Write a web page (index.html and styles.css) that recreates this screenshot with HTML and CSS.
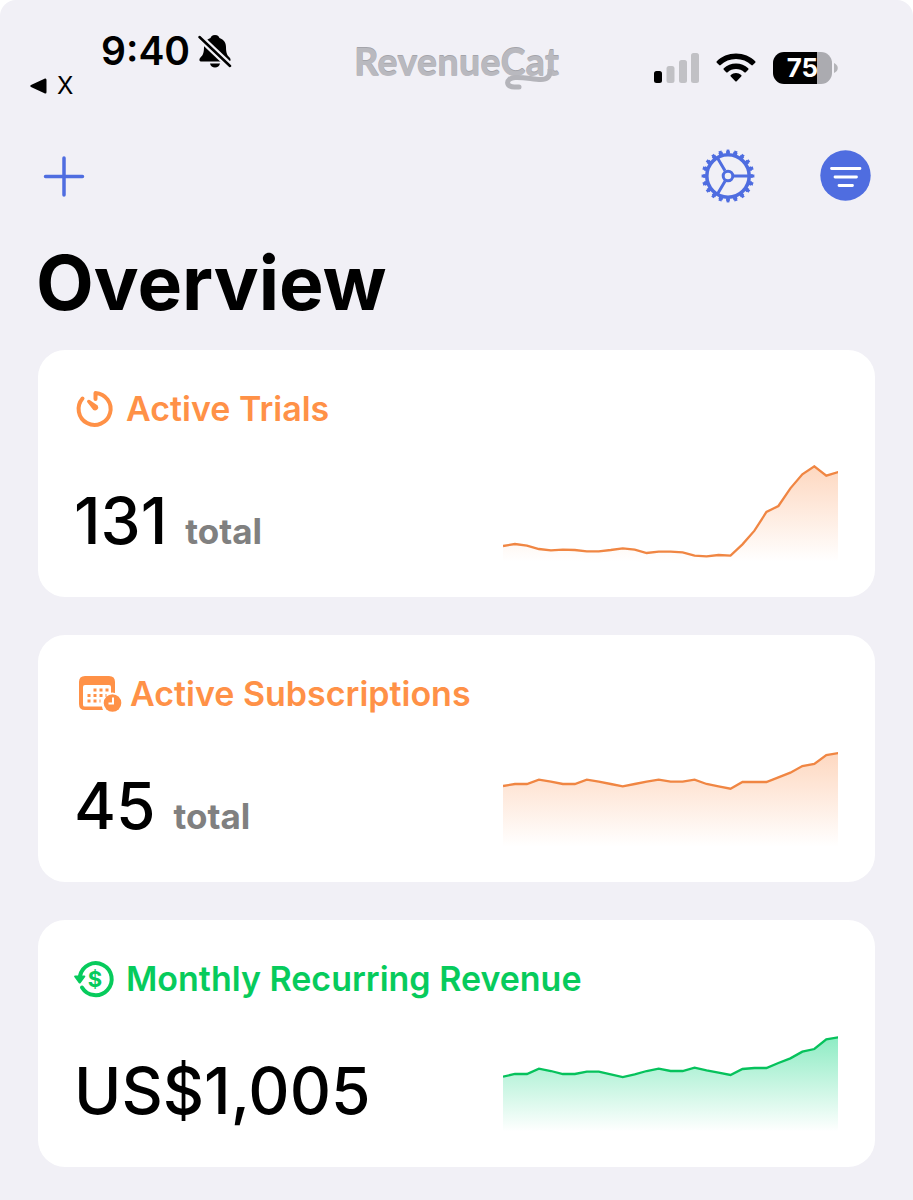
FILE: index.html
```html
<!DOCTYPE html>
<html lang="en">
<head>
    <meta charset="UTF-8">
    <meta name="viewport" content="width=device-width, initial-scale=1.0">
    <title>RevenueCat Overview</title>
    <link rel="stylesheet" href="styles.css">
</head>
<body>
    <div class="status">
        <div class="status-left">
            <div class="clock">
                <span>9:40</span>
                <svg width="34" height="34" viewBox="0 0 34 34" aria-label="Silent mode">
                    <path d="M17 1c-3 0-4 1.500-4.500 3C8 5.500 6 9 6 13c0 6-1 8-3.500 10.500C1 25 .8 27.500 3.500 27.500h27c2.700 0 2.500-2.500 1-4C29 21 28 19 28 13c0-4-2-7.500-6.500-9C21 2.500 20 1 17 1zM12 29.500h10c-.5 2.500-2.500 4-5 4s-4.500-1.500-5-4z"/>
                    <path class="slash-gap" d="M1 2.500L32 32"/>
                    <path class="slash" d="M1.500 3L32 32"/>
                </svg>
            </div>
            <a class="back" href="#">
                <svg width="17" height="16" viewBox="0 0 17 16"><path d="M15 0.500Q16.500 0 16.500 2v12q0 2-1.500 1.500L1 9Q-.500 8 1 7z"/></svg>
                X
            </a>
        </div>
        <div class="logo">
            RevenueCat
            <svg class="tail" width="56" height="22" viewBox="0 0 56 22"><path d="M47 0v2c0 6-3 8.500-9 8.500C30 10.500 22 8 12 8.500c-10 .5-10 10.500 1 9.500h3"/></svg>
        </div>
        <div class="status-right">
            <svg width="45" height="30" viewBox="0 0 45 30" aria-label="Signal">
                <rect x="0" y="18" width="8" height="12" rx="2.500"/>
                <g fill="#c1c1c5">
                    <rect x="12.500" y="13" width="8" height="17" rx="2.500"/>
                    <rect x="25" y="7" width="8" height="23" rx="2.500"/>
                    <rect x="37" y="0" width="8" height="30" rx="2.500"/>
                </g>
            </svg>
            <svg width="40" height="30" viewBox="0 0 40 30" aria-label="Wi-Fi">
                <path d="M20 0.500C12.500 .5 5.500 3.500 .8 8.200q-.8.800 0 1.500l2.400 2.400q.7.700 1.500 0C8.700 8.200 14 6 20 6s11.300 2.200 15.300 6.100q.8.700 1.500 0l2.400-2.400q.8-.700 0-1.500C34.500 3.500 27.500.5 20 .5z"/>
                <path d="M20 10.500c-4.700 0-9 1.800-12.200 4.800q-.8.800 0 1.500l2.400 2.400q.7.700 1.500 0c2.200-2 5.100-3.200 8.300-3.200s6.100 1.200 8.300 3.200q.8.700 1.500 0l2.400-2.400q.8-.700 0-1.500C29 12.300 24.700 10.500 20 10.500z"/>
                <path d="M20 20c-2 0-3.800.8-5.200 2q-.8.700 0 1.500l4.500 4.700q.7.700 1.400 0l4.500-4.700q.8-.800 0-1.500C23.800 20.800 22 20 20 20z"/>
            </svg>
            <div class="battery">
                <span class="level">75</span>
                <svg width="4" height="10" viewBox="0 0 4 10"><path d="M0 0c5 2 5 8 0 10z"/></svg>
            </div>
        </div>
    </div>

    <nav class="toolbar">
        <button type="button" aria-label="Add">
            <svg width="44" height="54" viewBox="0 0 44 54" class="line"><path d="M22 9v37M3.500 27.500h37"/></svg>
        </button>
        <div class="actions">
            <button type="button" aria-label="Settings">
                <svg width="54" height="54" viewBox="0 0 54 54" class="gear">
                    <circle cx="27" cy="27" r="21.200" stroke-width="3.600"/>
                    <circle cx="27" cy="27" r="23.500" stroke-width="2.500" pathLength="40" stroke-dasharray="1.1 0.9" stroke-dashoffset="0.550"/>
                    <circle cx="27" cy="27" r="25" stroke-width="2.800" pathLength="40" stroke-dasharray="0.760 1.240" stroke-dashoffset="0.380"/>
                    <circle cx="27" cy="27" r="4.800" stroke-width="3"/>
                    <path d="M33 27h14M24 21.800L16.500 9M24 32.200L16.500 45" stroke-width="3"/>
                </svg>
            </button>
            <button type="button" aria-label="Filter">
                <svg width="51" height="54" viewBox="0 0 51 54" class="filter">
                    <circle cx="25.500" cy="26.500" r="25.200"/>
                    <path d="M11.500 19.500h28.500M15 28h21.500M19 36.500h13.500"/>
                </svg>
            </button>
        </div>
    </nav>

    <h1>Overview</h1>

    <main>
        <section class="card orange">
            <h2>
                <svg width="40" height="40" viewBox="0 0 40 40">
                    <path class="ring" d="M6.500 9.500A16 16 0 1 0 19.500 4v6"/>
                    <path d="M11.500 11.200q1-.9 2.200-.2l8 5.500a3.300 3.300 0 0 1-4.400 4.600L11.300 13.200q-.7-1.200.2-2z"/>
                </svg>
                Active Trials
            </h2>
            <div class="body">
                <p class="metric"><span class="value">131</span> <span class="unit">total</span></p>
                <svg class="chart" id="trials" viewBox="0 0 1008 294" preserveAspectRatio="none"></svg>
            </div>
        </section>

        <section class="card orange">
            <h2>
                <svg width="44" height="40" viewBox="0 0 44 40">
                    <path fill-rule="evenodd" d="M9 2h24q6 0 6 6v11a9.500 9.500 0 0 0-4-.300V13q0-2-2-2H9q-2 0-2 2v18q0 1.500 2 1.500h17a11 11 0 0 0 1 3.500H9q-6 0-6-6V8q0-6 6-6z"/>
                    <path class="dots" d="M17.500 16h15M11.500 21.500h19M11.500 27h13"/>
                    <circle cx="36.500" cy="29" r="8.800"/>
                    <path class="hands" d="M37 23.500v6h-4.500"/>
                </svg>
                Active Subscriptions
            </h2>
            <div class="body">
                <p class="metric"><span class="value">45</span> <span class="unit">total</span></p>
                <svg class="chart" id="subscriptions" viewBox="0 0 1008 294" preserveAspectRatio="none"></svg>
            </div>
        </section>

        <section class="card green">
            <h2>
                <svg width="40" height="40" viewBox="0 0 40 40">
                    <path class="ring" d="M4 17A16 16 0 1 1 6 28.500"/>
                    <path d="M-1 16.500h9.500q1.500.2.600 1.500l-4.400 6q-1 1-2 0l-4.400-6q-.8-1.300.7-1.500z"/>
                    <text x="19" y="27.500">$</text>
                </svg>
                Monthly Recurring Revenue
            </h2>
            <div class="body">
                <p class="metric"><span class="value">US$1,005</span></p>
                <svg class="chart" id="mrr" viewBox="0 0 1008 294" preserveAspectRatio="none"></svg>
            </div>
        </section>
    </main>

    <script>
        // line heights measured down from the top of each chart
        const charts = {
            trials: [243, 237, 242, 252, 256, 254, 255, 259, 259, 255, 250, 254, 264, 260, 260, 262, 272, 274, 270, 272, 238, 197, 141, 123, 70, 28, 4, 32, 21],
            subscriptions: [108, 102, 102, 89, 95, 102, 102, 89, 95, 102, 109, 102, 95, 89, 95, 95, 89, 102, 109, 116, 96, 96, 96, 82, 68, 48, 42, 15, 9],
            mrr: [125, 117, 117, 101, 108, 117, 117, 110, 110, 118, 126, 118, 108, 101, 108, 108, 98, 106, 113, 120, 102, 99, 99, 84, 70, 50, 42, 13, 7]
        };

        Object.keys(charts).forEach(id => {
            const data = charts[id];
            const step = 1008 / (data.length - 1);
            const points = data.map((y, i) => `${i * step},${y}`).join(' ');
            document.getElementById(id).innerHTML = `
                <defs>
                    <linearGradient id="${id}-fill" x1="0" y1="0" x2="0" y2="1">
                        <stop class="fill-top" offset="0"/>
                        <stop class="fill-bottom" offset="1"/>
                    </linearGradient>
                </defs>
                <polygon points="0,290 ${points} 1008,290" fill="url(#${id}-fill)"/>
                <polyline points="${points}"/>`;
        });
    </script>
</body>
</html>
```
FILE: styles.css
```css
* { box-sizing: border-box; }
html { background: #fff; }
body { margin: 0; min-height: 100vh; padding-bottom: 32px; border-radius: 16px 16px 0 0; background: #f1f0f6; color: #000; font-family: Inter, "Liberation Sans", sans-serif; }
h1, h2, p { margin: 0; }
svg { display: block; flex: none; }
button { padding: 0; border: 0; background: none; cursor: pointer; }

.status { display: grid; grid-template-columns: 1fr auto 1fr; padding: 26px 30px 0; height: 149px; }
.status-left { display: flex; flex-direction: column; }
.clock { display: flex; align-items: center; gap: 8px; margin-left: 71px; font-size: 39px; font-weight: 600; line-height: 50px; }
.slash-gap { stroke: #f1f0f6; stroke-width: 7; }
.slash { stroke: #000; stroke-width: 2.5; stroke-linecap: round; }
.back { display: flex; align-items: center; gap: 10px; color: #000; font-size: 24px; line-height: 20px; text-decoration: none; }
.logo { position: relative; padding-top: 13px; color: #b9b9bf; font-family: Lato, sans-serif; font-size: 38px; font-weight: 900; line-height: 44px; text-shadow: 0 -1px 0 #a4a4aa; }
.tail { position: absolute; right: 0; top: 43px; fill: none; stroke: #b4b4ba; stroke-width: 5; stroke-linecap: round; }
.status-right { display: flex; justify-content: flex-end; align-items: flex-start; gap: 17px; padding: 27px 45px 0 0; }
.battery { display: flex; align-items: center; gap: 2px; margin-top: -1px; fill: #b4b4b8; }
.level { width: 59px; border-radius: 11px; background: linear-gradient(to right, #000 75%, #ababb0 75%); color: #fff; font-size: 26px; font-weight: 700; line-height: 32px; text-align: center; }

.toolbar { display: flex; justify-content: space-between; padding: 0 42px; }
.actions { display: flex; gap: 65px; }
.line { fill: none; stroke: #4f6de0; stroke-width: 3.5; stroke-linecap: round; }
.gear { fill: none; stroke: #4f6de0; }
.filter { fill: #4f6de0; }
.filter path { stroke: #fff; stroke-width: 2.8; stroke-linecap: round; }

h1 { margin: 40px 36px 27px; font-size: 75px; font-weight: 700; line-height: 80px; }

main { display: flex; flex-direction: column; gap: 38px; padding: 0 38px; }
.card { padding: 37px 37px 34px 38px; border-radius: 27px; background: #fff; }
.card h2 { display: flex; align-items: center; gap: 10px; color: var(--accent); font-size: 34px; font-weight: 600; line-height: 44px; }
.card h2 svg { overflow: visible; fill: var(--accent); }
.ring { fill: none; stroke: var(--accent); stroke-width: 4; stroke-linecap: round; stroke-linejoin: round; }
.dots { stroke: var(--accent); stroke-width: 3; stroke-dasharray: 3 3; }
.hands { fill: none; stroke: #fff; stroke-width: 2; }
.card h2 text { font-size: 22px; font-weight: 700; text-anchor: middle; }
.orange { --accent: #ff9147; --line: #f08643; --fill: #fb9251; --strength: 0.36; }
.green { --accent: #07cb5c; --line: #06c25c; --fill: #05d47c; --strength: 0.45; }

.body { display: flex; justify-content: space-between; align-items: flex-end; margin-top: 34px; }
.metric { display: flex; align-items: baseline; gap: 18px; margin: 0 0 10px -2px; }
.value { font-size: 64px; font-weight: 500; line-height: 64px; }
.unit { color: #808080; font-size: 35px; font-weight: 700; line-height: 35px; }
.chart { width: 44%; height: 98px; }
.chart polyline { fill: none; stroke: var(--line); stroke-width: 2.3; vector-effect: non-scaling-stroke; }
.fill-top { stop-color: var(--fill); stop-opacity: var(--strength); }
.fill-bottom { stop-color: var(--fill); stop-opacity: 0; }
```
